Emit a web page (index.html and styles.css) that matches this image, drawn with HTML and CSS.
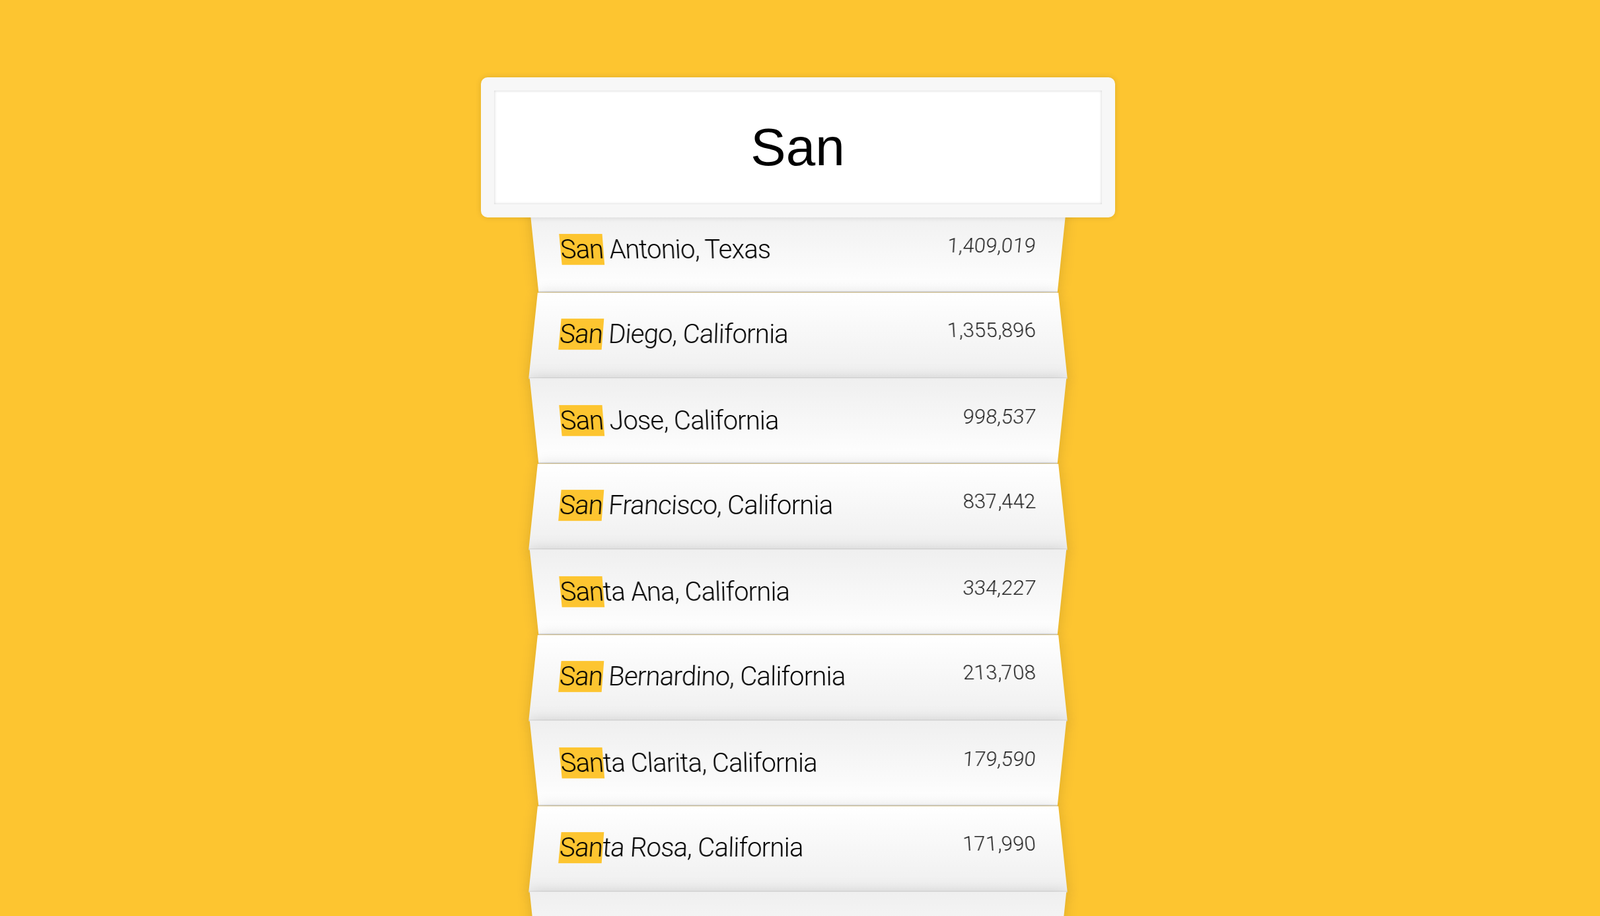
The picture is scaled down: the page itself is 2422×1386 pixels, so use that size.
FILE: index.html
```html
<!DOCTYPE html>
<html lang="en">
<head>
<meta charset="utf-8">
<title>Type Ahead</title>
<link rel="stylesheet" href="styles.css">
</head>
<body>
<form class="search-form">
  <input type="text" class="search" value="San" placeholder="City or State">
  <ul class="suggestions">
    <li><span class="name"><span class="hl">San</span> Antonio, Texas</span><span class="population">1,409,019</span></li>
    <li><span class="name"><span class="hl">San</span> Diego, California</span><span class="population">1,355,896</span></li>
    <li><span class="name"><span class="hl">San</span> Jose, California</span><span class="population">998,537</span></li>
    <li><span class="name"><span class="hl">San</span> Francisco, California</span><span class="population">837,442</span></li>
    <li><span class="name"><span class="hl">San</span>ta Ana, California</span><span class="population">334,227</span></li>
    <li><span class="name"><span class="hl">San</span> Bernardino, California</span><span class="population">213,708</span></li>
    <li><span class="name"><span class="hl">San</span>ta Clarita, California</span><span class="population">179,590</span></li>
    <li><span class="name"><span class="hl">San</span>ta Rosa, California</span><span class="population">171,990</span></li>
    <li><span class="name">Thou<span class="hl">san</span>d Oaks, California</span><span class="population">128,731</span></li>
  </ul>
</form>
</body>
</html>
```

FILE: styles.css
```css
html {
  box-sizing: border-box;
  background: #fdc530;
  font-family: Roboto, "Liberation Sans", sans-serif;
  font-size: 40px;
  font-weight: 300;
}

*, *::before, *::after {
  box-sizing: inherit;
}

body {
  margin: 0;
  padding-right: 7px;
}

.search-form {
  max-width: 800px;
  margin: 117px auto 100px;
}

.search {
  display: block;
  position: relative;
  z-index: 2;
  width: 120%;
  margin: 0 -10% -21px;
  padding: 40px;
  border: 20px solid #f7f7f7;
  border-radius: 10px;
  outline: 0;
  background: #fff;
  color: #000;
  text-align: center;
  font-family: "Liberation Sans", Arial, sans-serif;
  font-size: 80px;
  font-weight: 400;
  line-height: 92px;
  height: 212px;
  box-shadow: 0 0 10px rgba(0, 0, 0, 0.12), inset 0 0 4px rgba(0, 0, 0, 0.19);
}

.suggestions {
  margin: 0;
  padding: 0;
  position: relative;
}

.suggestions li {
  list-style: none;
  display: flex;
  justify-content: space-between;
  margin: 0;
  padding: 40px;
  line-height: 47.5px;
  background: #fff;
  border-bottom: 2px solid #d8d8d8;
  box-shadow: 0 0 20px rgba(0, 0, 0, 0.14);
  text-transform: capitalize;
  color: #000;
}

.suggestions li:nth-child(even) {
  transform: perspective(200px) rotateX(3deg) translateY(4px) scale(1.001);
  background: linear-gradient(to bottom, #ffffff 0%, #efefef 100%);
}

.suggestions li:nth-child(odd) {
  transform: perspective(200px) rotateX(-3deg) translateY(6px);
  background: linear-gradient(to top, #ffffff 0%, #efefef 100%);
}

.name {
  letter-spacing: -0.8px;
}

.population {
  font-size: 31px;
  line-height: 36px;
  letter-spacing: 0.2px;
  color: #1e1e1e;
}

.hl {
  background: #fdc530;
}
```
